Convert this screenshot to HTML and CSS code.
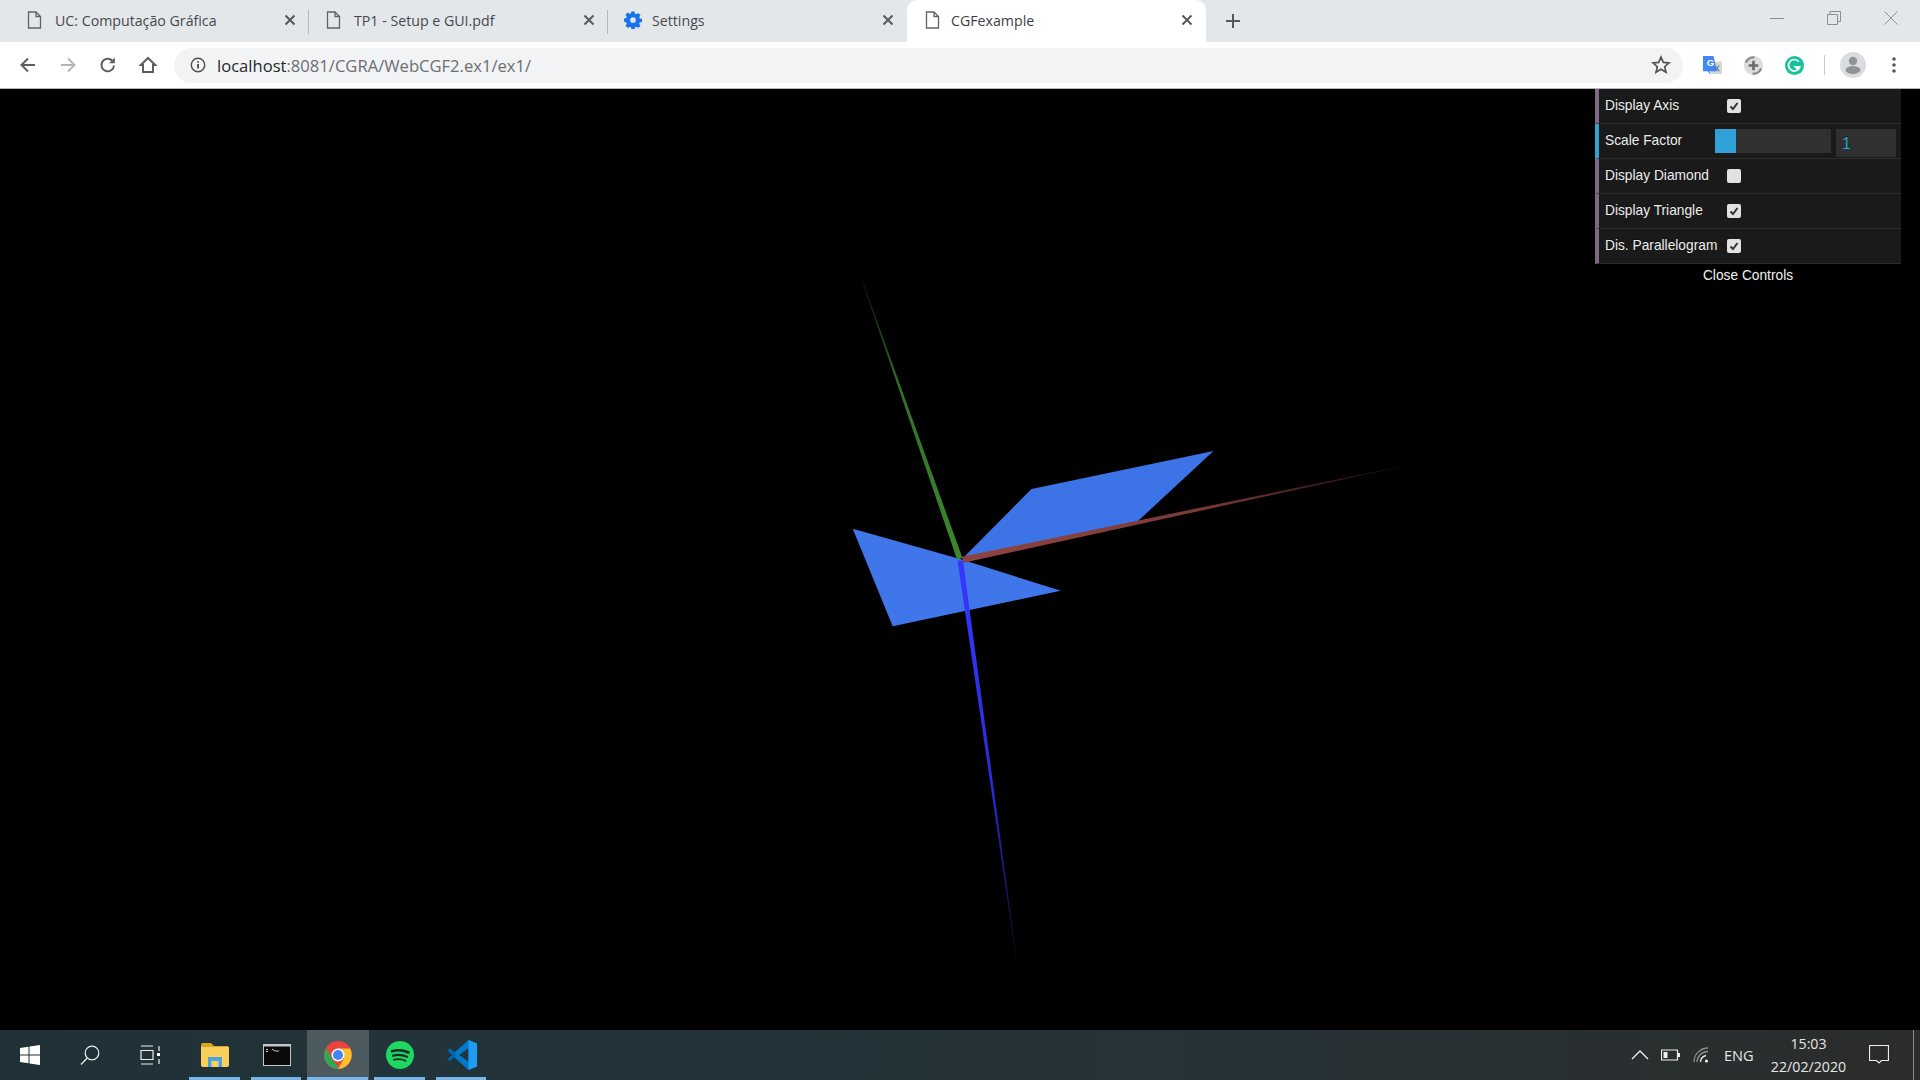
FILE: index.html
```html
<!DOCTYPE html>
<html lang="en">
<head>
<meta charset="utf-8">
<title>CGFexample</title>
<link rel="stylesheet" href="styles.css">
</head>
<body>
<header class="chrome">
  <div class="tabbar">
    <div class="tab">
      <svg class="tab-icon" viewBox="0 0 14 18"><path class="file" d="M1 1h7.5L13 5.5V17H1zM8.5 1v4.500H13"/></svg>
      <span class="tab-title">UC: Computação Gráfica</span>
      <svg class="tab-close" viewBox="0 0 12 12"><path d="M1.500 1.500l9 9M10.500 1.500l-9 9"/></svg>
      <span class="tab-sep"></span>
    </div>
    <div class="tab">
      <svg class="tab-icon" viewBox="0 0 14 18"><path class="file" d="M1 1h7.5L13 5.5V17H1zM8.5 1v4.500H13"/></svg>
      <span class="tab-title">TP1 - Setup e GUI.pdf</span>
      <svg class="tab-close" viewBox="0 0 12 12"><path d="M1.500 1.500l9 9M10.500 1.500l-9 9"/></svg>
      <span class="tab-sep"></span>
    </div>
    <div class="tab tab-settings">
      <svg class="tab-icon gear" viewBox="-0.5 -0.5 19 19"><path class="gear-shape" fill-rule="evenodd" d="M7.300 0h3.400l.4 2.300 1.400.6 2-1.300 2.400 2.400-1.300 2 .6 1.400 2.300.4v3.400l-2.300.4-.6 1.400 1.300 2-2.400 2.400-2-1.300-1.400.6-.4 2.300H7.300l-.4-2.300-1.400-.6-2 1.300-2.400-2.400 1.300-2-.6-1.400L-.5 10.700V7.300l2.300-.4.6-1.400-1.300-2 2.400-2.400 2 1.300 1.400-.6zM9 6a3 3 0 1 0 0 6 3 3 0 0 0 0-6z"/></svg>
      <span class="tab-title">Settings</span>
      <svg class="tab-close" viewBox="0 0 12 12"><path d="M1.500 1.500l9 9M10.500 1.500l-9 9"/></svg>
    </div>
    <div class="tab tab-active">
      <svg class="tab-icon" viewBox="0 0 14 18"><path class="file" d="M1 1h7.5L13 5.500V17H1zM8.500 1v4.500H13"/></svg>
      <span class="tab-title">CGFexample</span>
      <svg class="tab-close" viewBox="0 0 12 12"><path d="M1.500 1.500l9 9M10.500 1.500l-9 9"/></svg>
    </div>
    <svg class="new-tab" viewBox="0 0 16 16"><path d="M8 1v14M1 8h14"/></svg>
    <div class="window-controls">
      <svg class="win-btn" viewBox="0 0 14 14"><path d="M0 7.500h14"/></svg>
      <svg class="win-btn" viewBox="0 0 14 14"><path d="M.5 3.500h10v10H.5zM3 3.500V.500h10.500v10h-3"/></svg>
      <svg class="win-btn" viewBox="0 0 14 14"><path d="M.5.500l13 13M13.500.500l-13 13"/></svg>
    </div>
  </div>
  <div class="toolbar">
    <svg class="nav nav-back" viewBox="0 0 18 18"><path d="M16 9H3M9 2.500 2.500 9 9 15.500"/></svg>
    <svg class="nav nav-fwd" viewBox="0 0 18 18"><path d="M2 9h13M9 2.500 15.500 9 9 15.500"/></svg>
    <svg class="nav nav-reload" viewBox="0 0 18 18"><path d="M15 9.500a6.300 6.300 0 1 1-1.700-4.800"/><path class="solid" d="M15.800 1.500v5.700h-5.700z"/></svg>
    <svg class="nav nav-home" viewBox="0 0 18 18"><path d="M9 2 1.800 9H4v7h10V9h2.200z"/></svg>
    <div class="omnibox">
      <svg class="info" viewBox="0 0 16 16"><circle cx="8" cy="8" r="6.700"/><path class="info-i" d="M8 7v4.500M8 4.300v1.400"/></svg>
      <span class="url"><b>localhost</b>:8081/CGRA/WebCGF2.ex1/ex1/</span>
      <svg class="star" viewBox="0 0 20 20"><path d="M10 2.200l2.300 5.200 5.700.5-4.300 3.800 1.300 5.600-5-3-5 3 1.300-5.600L2 7.900l5.700-.5z"/></svg>
    </div>
    <div class="extensions">
      <svg class="ext" viewBox="0 0 22 22"><rect class="gt-grey" x="9" y="7" width="12" height="13"/><path class="gt-cross" d="M13 11l5 6M18 11l-5 6"/><path class="gt-blue" d="M1 1h11l4 16H8l1 4-3-4H1z"/><text class="gt-letter" x="5" y="12">G</text></svg>
      <svg class="ext" viewBox="0 0 22 22"><circle class="sc-bg" cx="11" cy="11" r="10"/><path class="sc-ring" d="M3 8a8.500 8.500 0 0 1 9-5.500M19 14a8.500 8.500 0 0 1-9 5.500"/><path class="sc-plus" d="M11 6v10M6 11h10"/></svg>
      <svg class="ext" viewBox="0 0 22 22"><circle class="gm-bg" cx="11" cy="11" r="10"/><path class="gm-g" d="M15.500 7a6 6 0 1 0 1 5.500h-4.500l3 3"/></svg>
      <span class="tool-sep"></span>
      <svg class="avatar" viewBox="0 0 26 26"><circle class="av-bg" cx="13" cy="13" r="13"/><circle class="av-fg" cx="13" cy="9" r="4.200"/><ellipse class="av-fg" cx="13" cy="18" rx="7.500" ry="4"/></svg>
      <svg class="kebab" viewBox="0 0 6 18"><circle cx="3" cy="3" r="1.800"/><circle cx="3" cy="9" r="1.800"/><circle cx="3" cy="15" r="1.800"/></svg>
    </div>
  </div>
</header>

<main class="stage">
  <svg class="scene" viewBox="0 89 1920 941">
    <defs>
      <linearGradient id="fadeG" gradientUnits="userSpaceOnUse" x1="960" y1="558" x2="860" y2="275">
        <stop offset="0" stop-color="#3d8530"/><stop offset=".6" stop-color="#33702a"/><stop offset="1" stop-color="#0a1a08"/>
      </linearGradient>
      <linearGradient id="fadeR" gradientUnits="userSpaceOnUse" x1="962" y1="560" x2="1400" y2="466">
        <stop offset="0" stop-color="#8f4440"/><stop offset=".55" stop-color="#7a3a36"/><stop offset="1" stop-color="#1a0a08"/>
      </linearGradient>
      <linearGradient id="fadeB" gradientUnits="userSpaceOnUse" x1="960" y1="560" x2="1016" y2="958">
        <stop offset="0" stop-color="#3636ff"/><stop offset=".55" stop-color="#2c2cd8"/><stop offset="1" stop-color="#0a0a30"/>
      </linearGradient>
    </defs>
    <polygon class="plane-a" points="963,558 1031.500,489 1213.500,451 1138,521"/>
    <polygon class="plane-b" points="852.700,528.700 892.700,626.300 1060.700,590.700 960,559"/>
    <polygon fill="url(#fadeG)" points="957,559.500 962.500,558 861,276.500 860.500,276.500"/>
    <polygon fill="url(#fadeR)" points="962,556.800 963.500,562.800 1400,467 1400,466.500"/>
    <polygon fill="url(#fadeB)" points="957.500,560.500 963,560.500 1016.500,958 1016,958"/>
  </svg>
  <aside class="gui">
    <div class="gui-row">
      <span class="gui-label">Display Axis</span>
      <span class="check on"><svg viewBox="0 0 14 14"><path d="M3.500 7.500l2.500 2.500 4.500-6"/></svg></span>
    </div>
    <div class="gui-row gui-number">
      <span class="gui-label">Scale Factor</span>
      <span class="slider"><span class="slider-fill"></span></span>
      <span class="value">1</span>
    </div>
    <div class="gui-row">
      <span class="gui-label">Display Diamond</span>
      <span class="check"></span>
    </div>
    <div class="gui-row">
      <span class="gui-label">Display Triangle</span>
      <span class="check on"><svg viewBox="0 0 14 14"><path d="M3.500 7.500l2.500 2.500 4.500-6"/></svg></span>
    </div>
    <div class="gui-row">
      <span class="gui-label">Dis. Parallelogram</span>
      <span class="check on"><svg viewBox="0 0 14 14"><path d="M3.500 7.500l2.500 2.500 4.500-6"/></svg></span>
    </div>
    <div class="gui-close">Close Controls</div>
  </aside>
</main>

<footer class="taskbar">
  <div class="tb-system">
    <svg class="tb-sys-icon" viewBox="0 0 20 20"><path class="win" d="M0 3l8.500-1.200V9.500H0zM9.500 1.600 20 0v9.500H9.500zM0 10.500h8.500v7.700L0 17zM9.500 10.500H20V20L9.500 18.400z"/></svg>
    <svg class="tb-sys-icon" viewBox="0 0 20 20"><circle class="line" cx="12" cy="8" r="6.800"/><path class="line" d="M7.200 13 1 19.500"/></svg>
    <svg class="tb-sys-icon" viewBox="0 0 20 20"><path class="line" d="M1 1h12M1 19h12M1 5.500h12v9H1zM19 1v5M19 14v5"/><rect class="win" x="17" y="8" width="3" height="3"/></svg>
  </div>
  <div class="tb-apps">
    <div class="tb-app">
      <svg class="app-icon" viewBox="0 0 28 24"><path fill="#d9a520" d="M0 2q0-2 2-2h8l3 3h13q2 0 2 2v3H0z"/><path fill="#fbd05a" d="M0 4h28v18q0 2-2 2H2q-2 0-2-2z"/><path fill="#4fa3dc" d="M7 24V14h14v10h-3.500v-6h-7v6z"/></svg>
    </div>
    <div class="tb-app">
      <svg class="app-icon" viewBox="0 0 28 24"><rect fill="#c4c7c9" width="28" height="22" y="1"/><rect fill="#0a0a0a" x="1" y="3.500" width="26" height="18.500"/><path fill="none" stroke="#c8c8c8" d="M3 6.500h2M3 8.500h2M9 6l3 2h4"/></svg>
    </div>
    <div class="tb-app tb-app-active">
      <svg class="app-icon" viewBox="0 0 28 28"><circle cx="14" cy="14" r="14" fill="#e8453c"/><path fill="#31a853" d="M14 28A14 14 0 0 1 1.900 7l7 12 6.500 8.900z"/><path fill="#fbc02d" d="M14 7.500h12.100A14 14 0 0 1 14 28l6-10.500z"/><circle cx="14" cy="14" r="6.500" fill="#fff"/><circle cx="14" cy="14" r="5" fill="#4285f4"/></svg>
    </div>
    <div class="tb-app">
      <svg class="app-icon" viewBox="0 0 28 28"><circle cx="14" cy="14" r="14" fill="#1ed760"/><path class="sp" d="M6 10.200q8.500-2.500 16.500 1.300"/><path class="sp sp2" d="M7 14.600q7.500-2 14 1.200"/><path class="sp sp3" d="M8 18.700q6-1.500 11.500 1"/></svg>
    </div>
    <div class="tb-app">
      <svg class="app-icon vs" viewBox="0 0 30 30"><path fill="#0065a9" d="M0 10.500 3 8.500l8 6-8 6.500L0 19.500 5 15z"/><path fill="#007acc" d="M21.500 0 30 3.500v23L21.500 30 7 17l4-3 10.500 8V8L11 16l-4-3z"/><path fill="#1f9cf0" d="M21.500 0 30 3.500v23L21.500 30z"/></svg>
    </div>
  </div>
  <div class="tb-tray">
    <svg class="tray-chev" viewBox="0 0 18 10"><path d="M1 9l8-8 8 8"/></svg>
    <svg class="tray-batt" viewBox="0 0 19 12"><path d="M.5 1h16v10H.5z"/><rect class="fill" x="2.500" y="3" width="4" height="6"/><rect class="fill" x="17" y="4" width="2" height="4"/></svg>
    <svg class="tray-wifi" viewBox="0 0 16 16"><path class="dim" d="M1 15A14 14 0 0 1 15 1"/><path class="dim" d="M4 15A11 11 0 0 1 15 4.500"/><path d="M7.500 15A7 7 0 0 1 13 8.500"/><circle cx="13.500" cy="14" r="1.600"/></svg>
    <span class="tray-lang">ENG</span>
    <div class="clock"><span>15:03</span><span>22/02/2020</span></div>
    <svg class="tray-note" viewBox="0 0 20 20"><path d="M.5.500h19v15h-7l-2.500 2.500-2.500-2.500h-7z"/></svg>
    <span class="tray-desktop"></span>
  </div>
</footer>
</body>
</html>
```

FILE: styles.css
```css
* { box-sizing: border-box; }
html, body { margin: 0; height: 100%; }
body {
  display: flex;
  flex-direction: column;
  height: 1080px;
  width: 1920px;
  overflow: hidden;
  background: #000;
  font-family: "Open Sans", "Liberation Sans", sans-serif;
}

/* browser chrome */
.chrome { flex: none; height: 89px; background: #fff; border-bottom: 1px solid #b5b8ba; }
.tabbar { height: 42px; display: flex; align-items: stretch; padding-left: 10px; background: #e4e7ea; }
.tab { position: relative; width: 299px; display: flex; align-items: center; padding: 0 13px 2px 17px; color: #45494e; font-size: 14.200px; }
.tab-active { background: #fff; border-radius: 10px 10px 0 0; color: #3c4043; padding-left: 18px; }
.tab-settings { padding-left: 16px; }
.tab-icon { width: 15px; height: 18px; flex: none; }
.tab-icon.gear { width: 18px; height: 18px; }
.file { fill: none; stroke: #5f6368; stroke-width: 1.300; }
.gear-shape { fill: #1a73e8; }
.tab-title { flex: 1; margin-left: 13px; white-space: nowrap; }
.tab-settings .tab-title { margin-left: 10px; }
.tab-active .tab-title { margin-left: 11px; }
.tab-close { width: 12px; height: 12px; flex: none; }
.tab-close path { fill: none; stroke: #55595d; stroke-width: 2; }
.tab-sep { position: absolute; right: 0; top: 10px; height: 24px; width: 1px; background: #b3b6ba; }
.new-tab { width: 16px; height: 16px; align-self: center; margin-left: 19px; flex: none; }
.new-tab path { fill: none; stroke: #55595d; stroke-width: 2; }
.window-controls { margin-left: auto; display: flex; align-self: flex-start; gap: 43px; padding: 11px 22px 0 0; }
.win-btn { width: 14px; height: 14px; }
.win-btn path { fill: none; stroke: #8c8f92; stroke-width: 1; }

.toolbar { height: 46px; display: flex; align-items: center; padding-left: 19px; }
.nav { width: 18px; height: 18px; flex: none; margin-right: 22px; }
.nav path { fill: none; stroke: #5b5f63; stroke-width: 2; }
.nav .solid { fill: #5b5f63; stroke: none; }
.nav-fwd path { stroke: #b4b7ba; }
.nav-home { margin-right: 17px; }
.omnibox { flex: none; width: 1509px; height: 35px; border-radius: 18px; background: #f1f3f4; display: flex; align-items: center; padding: 0 12px 0 16px; }
.info { width: 16px; height: 16px; flex: none; }
.info circle { fill: none; stroke: #4c5054; stroke-width: 1.400; }
.info-i { fill: none; stroke: #4c5054; stroke-width: 1.800; }
.url { flex: 1; margin-left: 11px; font-size: 16.600px; color: #6b6f73; white-space: nowrap; }
.url b { font-weight: 400; color: #26282b; }
.star { width: 20px; height: 20px; flex: none; }
.star path { fill: none; stroke: #505458; stroke-width: 1.700; }
.extensions { flex: none; display: flex; align-items: center; padding-left: 19px; }
.ext { width: 21px; height: 21px; margin-right: 20px; flex: none; }
.gt-grey { fill: #d6d6d4; }
.gt-cross { fill: none; stroke: #6b7580; stroke-width: 1.200; }
.gt-blue { fill: #4285f4; }
.gt-letter { fill: #fff; font-size: 10px; font-weight: 700; font-family: "Liberation Sans", sans-serif; }
.sc-bg { fill: #dcdcdc; }
.sc-ring { fill: none; stroke: #8d8d8d; stroke-width: 2.500; }
.sc-plus { fill: none; stroke: #6a6a6a; stroke-width: 2.800; }
.gm-bg { fill: #15c39a; }
.gm-g { fill: none; stroke: #fff; stroke-width: 1.800; }
.tool-sep { width: 1px; height: 20px; background: #c9cbcd; margin: 0 15px 0 -1px; }
.avatar { width: 26px; height: 26px; flex: none; margin-right: 25px; }
.av-bg { fill: #dadce0; }
.av-fg { fill: #909396; }
.kebab { width: 6px; height: 18px; flex: none; }
.kebab circle { fill: #55595d; }

/* canvas + controls */
.stage { flex: 1; position: relative; background: #000; }
.scene { display: block; width: 1920px; height: 941px; }
.plane-a { fill: #3c73e6; }
.plane-b { fill: #3f77ea; }
.gui { position: absolute; top: 0; right: 19px; width: 306px; font-family: "Liberation Sans", Arial, sans-serif; font-size: 13.750px; color: #eee; }
.gui-row { height: 35px; display: flex; align-items: center; background: #1a1a1a; border-left: 4px solid #806787; border-bottom: 1px solid #2c2c2c; padding: 0 0 1px 6px; text-shadow: 0 -1px 0 #111; }
.gui-number { border-left-color: #2fa1d6; }
.gui-label { width: 122px; flex: none; white-space: nowrap; }
.check { width: 14px; height: 14px; border-radius: 2px; background: #e2e2e2; flex: none; }
.check svg { display: block; width: 14px; height: 14px; }
.check path { fill: none; stroke: #333; stroke-width: 2; }
.gui-number .gui-label { width: 110px; }
.slider { width: 116px; height: 24px; background: #303030; flex: none; }
.slider-fill { display: block; width: 21px; height: 24px; background: #2fa1d6; }
.value { width: 60px; height: 28px; margin: 4px 0 0 5px; background: #303030; color: #2fa1d6; font-size: 16px; line-height: 30px; padding-left: 6px; flex: none; }
.gui-close { height: 24px; line-height: 24px; text-align: center; text-shadow: 0 -1px 0 #111; }

/* taskbar */
.taskbar { flex: none; height: 50px; display: flex; background: linear-gradient(90deg, #1f3037 0%, #22343a 25%, #263338 60%, #2b2c2b 100%); color: #e6e6e6; }
.tb-system { display: flex; width: 184px; flex: none; }
.tb-sys-icon { width: 20px; height: 20px; margin: 15px 20px; flex: none; }
.win { fill: #fff; }
.line { fill: none; stroke: #f0f0f0; stroke-width: 1.200; }
.tb-apps { display: flex; flex: none; }
.tb-app { position: relative; width: 61.700px; display: flex; align-items: center; justify-content: center; }
.tb-app::after { content: ""; position: absolute; left: 5px; right: 6px; bottom: 0; height: 3px; background: #76b6e8; }
.tb-app-active { background: #4c5a60; }
.tb-app-active::after { left: 0; right: 1px; }
.app-icon { width: 28px; height: 28px; }
.app-icon.vs { width: 30px; height: 30px; }
.sp { fill: none; stroke: #1b2a2a; stroke-width: 2.600; stroke-linecap: round; }
.sp2 { stroke-width: 2.200; }
.sp3 { stroke-width: 1.800; }
.tb-tray { flex: 1; display: flex; align-items: center; justify-content: flex-end; font-size: 14.200px; }
.tray-chev { width: 18px; height: 10px; flex: none; margin-right: 12px; }
.tray-chev path { fill: none; stroke: #eee; stroke-width: 1.300; }
.tray-batt { width: 19px; height: 12px; flex: none; margin-right: 13px; }
.tray-batt path { fill: none; stroke: #eee; stroke-width: 1.200; }
.fill { fill: #eee; }
.tray-wifi { width: 16px; height: 16px; flex: none; margin-right: 15px; }
.tray-wifi path { fill: none; stroke: #eee; stroke-width: 1.300; }
.tray-wifi .dim { stroke: #8b8f90; }
.tray-wifi circle { fill: #eee; }
.tray-lang { width: 30px; flex: none; white-space: nowrap; font-size: 14.600px; }
.clock { width: 109px; flex: none; display: flex; flex-direction: column; align-items: center; gap: 4px; line-height: 19px; }
.tray-note { width: 20px; height: 20px; flex: none; margin: 0 24px 0 6px; }
.tray-note path { fill: none; stroke: #eee; stroke-width: 1.200; }
.tray-desktop { width: 1px; height: 50px; background: #8a8d8e; flex: none; margin-right: 6px; }
```
